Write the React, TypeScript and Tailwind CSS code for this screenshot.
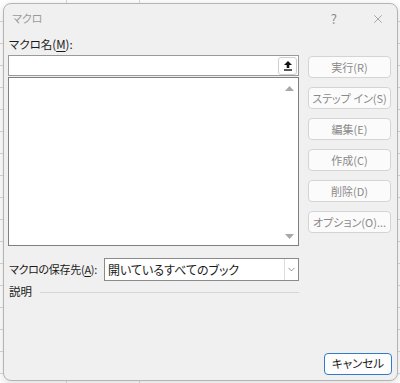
import { ChevronDown, X } from "lucide-react";

const font = "font-['Yu_Gothic_UI','Noto_Sans_CJK_JP',sans-serif] [font-feature-settings:'palt']";

const sideButtons = [
  "実行(R)",
  "ステップ イン(S)",
  "編集(E)",
  "作成(C)",
  "削除(D)",
  "オプション(O)...",
];

function UploadIcon() {
  return (
    <svg width="10" height="11" viewBox="0 0 10 11">
      <path d="M5 1 L9 5 H6.3 V8 H3.7 V5 H1 Z" fill="#111" />
      <rect x="1" y="9.3" width="8" height="1.4" fill="#111" />
    </svg>
  );
}

function Triangle({ down }: { down?: boolean }) {
  return (
    <svg width="9" height="5" viewBox="0 0 9 5">
      <path d={down ? "M0 0 H9 L4.5 5 Z" : "M0 5 H9 L4.5 0 Z"} fill="#a8a8a8" />
    </svg>
  );
}

export default function App() {
  return (
    <div
      className={`w-[400px] h-[383px] pl-[3px] pt-[3px] bg-white bg-[linear-gradient(to_right,transparent_66px,#d9d9d9_66px,#d9d9d9_67px,transparent_67px,transparent_139px,#d9d9d9_139px,#d9d9d9_140px,transparent_140px),repeating-linear-gradient(to_bottom,transparent_0px,transparent_21px,#d9d9d9_21px,#d9d9d9_22px)] overflow-hidden ${font} text-[11.5px] text-[#1a1a1a] whitespace-nowrap`}
    >
      <div className="w-[395px] h-[378px] flex flex-col bg-[#f0f0f0] border border-[#b4b4b4] rounded-lg shadow-[0_2px_8px_rgba(0,0,0,0.15)]">
        {/* Title bar */}
        <div className="h-[29px] flex items-center pl-[8px] pr-[12px] text-[#9a9a9a]">
          <span className="text-[11px]">マクロ</span>
          <span className="ml-auto mr-[34px] text-[13px] text-[#8a8a8a]">?</span>
          <X className="w-[14px] h-[14px] text-[#8a8a8a]" strokeWidth={1.2} />
        </div>

        {/* Body */}
        <div className="flex pl-[4px] pr-[6px] pt-[3px]">
          <div className="w-[291px] flex flex-col">
            <div className="h-[16px] leading-[16px] pl-[1px]">
              マクロ名(<span className="underline underline-offset-2">M</span>):
            </div>
            <div className="mt-[3px] h-[21px] bg-white border border-[#9a9a9a] flex items-center justify-end pr-[1px]">
              <div className="w-[19px] h-[18px] bg-white border border-[#cfcfcf] rounded-[3px] flex items-center justify-center">
                <UploadIcon />
              </div>
            </div>
            <div className="mt-[1px] h-[169px] bg-white border border-[#7f7f7f] flex justify-end">
              <div className="w-[15px] flex flex-col items-center justify-between pt-[8px] pb-[6px] mr-[1px]">
                <Triangle />
                <Triangle down />
              </div>
            </div>
            <div className="mt-[12px] h-[23px] flex items-center">
              <span className="w-[96px] pl-[1px] text-[11px] tracking-[-0.3px]">
                マクロの保存先(<span className="underline underline-offset-2">A</span>):
              </span>
              <div className="flex-1 h-full bg-white border border-[#8a8a8a] flex items-center">
                <span className="pl-[3px] text-[12px]">開いているすべてのブック</span>
                <div className="ml-auto w-[14px] h-full border-l border-[#dcdcdc] flex items-center justify-center">
                  <ChevronDown className="w-[11px] h-[11px] text-[#666]" strokeWidth={1.5} />
                </div>
              </div>
            </div>
            <div className="mt-[3px] h-[16px] flex items-center gap-[8px] pl-[1px]">
              <span>説明</span>
              <div className="flex-1 h-px bg-[#d6d6d6]" />
            </div>
          </div>

          <div className="ml-[9px] w-[83px] pt-[20px] flex flex-col gap-[9px]">
            {sideButtons.map((label) => (
              <div
                key={label}
                className="h-[22px] bg-[#fbfbfb] border border-[#d4d4d4] rounded-[4px] flex items-center justify-center text-[#8a8a8a] text-[11px]"
              >
                {label}
              </div>
            ))}
          </div>
        </div>

        {/* Footer */}
        <div className="mt-auto mb-[5px] flex justify-end pr-[5px]">
          <div className="w-[68px] h-[22px] bg-[#fdfdfd] border-[1.5px] border-[#2f7bd0] rounded-[4px] flex items-center justify-center">
            キャンセル
          </div>
        </div>
      </div>
    </div>
  );
}
